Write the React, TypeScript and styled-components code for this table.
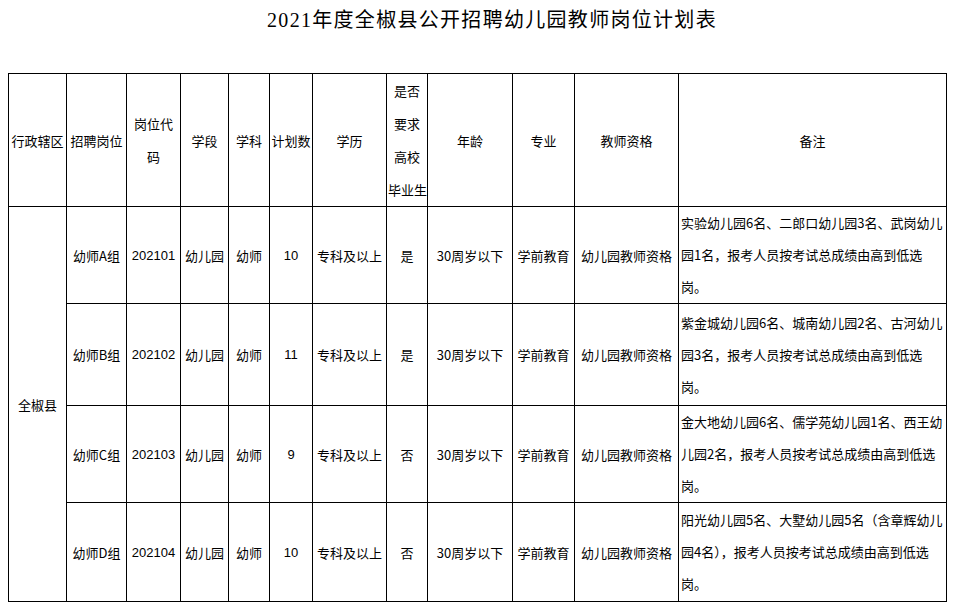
import { createGlobalStyle, styled } from 'styled-components';

interface IRow {
  group: string;
  code: string;
  count: string;
  graduate: string;
  note: string[];
  height: number;
}

const rows: IRow[] = [
  {
    group: '幼师A组',
    code: '202101',
    count: '10',
    graduate: '是',
    note: ['实验幼儿园6名、二郎口幼儿园3名、武岗幼儿', '园1名，报考人员按考试总成绩由高到低选', '岗。'],
    height: 96,
  },
  {
    group: '幼师B组',
    code: '202102',
    count: '11',
    graduate: '是',
    note: ['紫金城幼儿园6名、城南幼儿园2名、古河幼儿', '园3名，报考人员按考试总成绩由高到低选', '岗。'],
    height: 102,
  },
  {
    group: '幼师C组',
    code: '202103',
    count: '9',
    graduate: '否',
    note: ['金大地幼儿园6名、儒学苑幼儿园1名、西王幼', '儿园2名，报考人员按考试总成绩由高到低选', '岗。'],
    height: 97,
  },
  {
    group: '幼师D组',
    code: '202104',
    count: '10',
    graduate: '否',
    note: ['阳光幼儿园5名、大墅幼儿园5名（含章辉幼儿', '园4名），报考人员按考试总成绩由高到低选', '岗。'],
    height: 99,
  },
];

const widths = [58, 60, 54, 48, 41, 43, 74, 41, 85, 62, 104, 268];

export default function App() {
  return (
    <>
      <GlobalStyle />
      <Style.Page>
        <Style.Title>2021年度全椒县公开招聘幼儿园教师岗位计划表</Style.Title>
        <Style.Table>
          <colgroup>
            {widths.map((w, i) => (
              <col key={i} style={{ width: w }} />
            ))}
          </colgroup>
          <thead>
            <Style.HeadRow>
              <Style.Cell>行政辖区</Style.Cell>
              <Style.Cell>招聘岗位</Style.Cell>
              <Style.Cell>
                岗位代
                <br />码
              </Style.Cell>
              <Style.Cell>学段</Style.Cell>
              <Style.Cell>学科</Style.Cell>
              <Style.Cell>计划数</Style.Cell>
              <Style.Cell>学历</Style.Cell>
              <Style.Cell>
                是否
                <br />
                要求
                <br />
                高校
                <br />
                毕业生
              </Style.Cell>
              <Style.Cell>年龄</Style.Cell>
              <Style.Cell>专业</Style.Cell>
              <Style.Cell>教师资格</Style.Cell>
              <Style.Cell>备注</Style.Cell>
            </Style.HeadRow>
          </thead>
          <tbody>
            {rows.map((r, i) => (
              <Style.BodyRow key={r.code} $height={r.height}>
                {i === 0 && <Style.Cell rowSpan={4}>全椒县</Style.Cell>}
                <Style.Cell>{r.group}</Style.Cell>
                <Style.Cell $latin>{r.code}</Style.Cell>
                <Style.Cell>幼儿园</Style.Cell>
                <Style.Cell>幼师</Style.Cell>
                <Style.Cell $latin>{r.count}</Style.Cell>
                <Style.Cell>专科及以上</Style.Cell>
                <Style.Cell>{r.graduate}</Style.Cell>
                <Style.Cell>30周岁以下</Style.Cell>
                <Style.Cell>学前教育</Style.Cell>
                <Style.Cell>幼儿园教师资格</Style.Cell>
                <Style.Note>
                  {r.note.map((line) => (
                    <Style.NoteLine key={line}>{line}</Style.NoteLine>
                  ))}
                </Style.Note>
              </Style.BodyRow>
            ))}
          </tbody>
        </Style.Table>
      </Style.Page>
    </>
  );
}

const GlobalStyle = createGlobalStyle`
  body {
    margin: 0;
    background: #ffffff;
    color: #000000;
    font-family: "Liberation Sans", "Noto Sans CJK SC", sans-serif;
  }
`;

const Style = {
  Page: styled.div`
    width: 956px;
    padding: 0 8px;
    box-sizing: border-box;
  `,

  Title: styled.h1`
    margin: 0;
    height: 73px;
    padding: 8px 0 0 28px;
    box-sizing: border-box;
    text-align: center;
    font-family: "Liberation Serif", "Noto Sans CJK SC", serif;
    font-size: 20px;
    font-weight: normal;
    letter-spacing: 1.3px;
    line-height: 24px;
  `,

  Table: styled.table`
    width: 939px;
    table-layout: fixed;
    border-collapse: collapse;
    border: 1px solid #000;
  `,

  HeadRow: styled.tr`
    height: 133px;
  `,

  BodyRow: styled.tr<{ $height: number }>`
    height: ${(p) => p.$height}px;
  `,

  Cell: styled.td<{ $latin?: boolean }>`
    border: 1px solid #000;
    padding: 0 1px;
    text-align: center;
    vertical-align: middle;
    font-family: ${(p) =>
      p.$latin ? '"Liberation Sans", sans-serif' : '"Noto Sans CJK SC", sans-serif'};
    font-size: 13px;
    line-height: 33px;
    white-space: nowrap;
  `,

  Note: styled.td`
    border: 1px solid #000;
    padding: 0 0 0 2px;
    text-align: left;
    vertical-align: middle;
    font-family: "Noto Sans CJK SC", sans-serif;
    font-size: 13px;
    line-height: 32px;
    white-space: nowrap;
    overflow: hidden;
  `,

  NoteLine: styled.div``,
};
